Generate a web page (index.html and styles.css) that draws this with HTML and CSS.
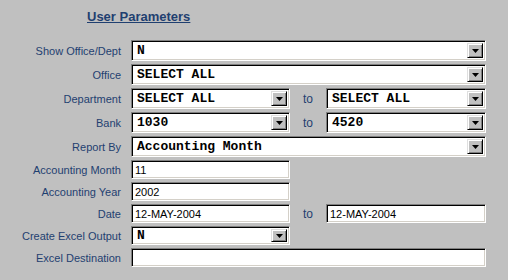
FILE: index.html
```html
<!DOCTYPE html>
<html lang="en">
<head>
  <meta charset="UTF-8"/>
  <title>User Parameters</title>
  <link rel="stylesheet" href="styles.css">
</head>
<body>
  <h1 class="title">User Parameters</h1>

  <form class="params">
    <label class="lbl">Show Office/Dept</label>
    <div class="select wide"><span class="val">N</span><span class="btn"><svg width="7" height="4" viewBox="0 0 7 4"><path d="M0 0h7L3.5 4z"/></svg></span></div>

    <label class="lbl">Office</label>
    <div class="select wide"><span class="val">SELECT ALL</span><span class="btn"><svg width="7" height="4" viewBox="0 0 7 4"><path d="M0 0h7L3.5 4z"/></svg></span></div>

    <label class="lbl">Department</label>
    <div class="select"><span class="val">SELECT ALL</span><span class="btn"><svg width="7" height="4" viewBox="0 0 7 4"><path d="M0 0h7L3.5 4z"/></svg></span></div>
    <span class="to">to</span>
    <div class="select"><span class="val">SELECT ALL</span><span class="btn"><svg width="7" height="4" viewBox="0 0 7 4"><path d="M0 0h7L3.5 4z"/></svg></span></div>

    <label class="lbl">Bank</label>
    <div class="select"><span class="val">1030</span><span class="btn"><svg width="7" height="4" viewBox="0 0 7 4"><path d="M0 0h7L3.5 4z"/></svg></span></div>
    <span class="to">to</span>
    <div class="select"><span class="val">4520</span><span class="btn"><svg width="7" height="4" viewBox="0 0 7 4"><path d="M0 0h7L3.5 4z"/></svg></span></div>

    <label class="lbl">Report By</label>
    <div class="select wide"><span class="val">Accounting Month</span><span class="btn"><svg width="7" height="4" viewBox="0 0 7 4"><path d="M0 0h7L3.5 4z"/></svg></span></div>

    <label class="lbl">Accounting Month</label>
    <input class="text" type="text" value="11">
    <span class="rest"></span>

    <label class="lbl">Accounting Year</label>
    <input class="text" type="text" value="2002">
    <span class="rest"></span>

    <label class="lbl">Date</label>
    <input class="text" type="text" value="12-MAY-2004">
    <span class="to">to</span>
    <input class="text" type="text" value="12-MAY-2004">

    <label class="lbl">Create Excel Output</label>
    <div class="select short"><span class="val">N</span><span class="btn"><svg width="7" height="4" viewBox="0 0 7 4"><path d="M0 0h7L3.5 4z"/></svg></span></div>
    <span class="rest"></span>

    <label class="lbl">Excel Destination</label>
    <input class="text wide" type="text" value="">
  </form>
</body>
</html>
```

FILE: styles.css
```css
:root {
  --bg: #c0c0c0;
  --label: #1f3f70;
  --dark: #808080;
  --light: #ffffff;
}

* {
  box-sizing: border-box;
}

body {
  margin: 0;
  background: var(--bg);
  font-family: "Liberation Sans", Arial, sans-serif;
  font-size: 11px;
  color: var(--label);
}

.title {
  margin: 0;
  padding: 9px 0 0 87px;
  height: 40px;
  font-size: 13px;
  font-weight: bold;
  text-decoration: underline;
  color: var(--label);
}

.params {
  display: grid;
  grid-template-columns: 131px 159px 36px 160px;
  row-gap: 3px;
  margin: 0;
}

.lbl {
  display: flex;
  align-items: center;
  justify-content: flex-end;
  padding-right: 10px;
  white-space: nowrap;
}

.to {
  display: flex;
  align-items: center;
  padding-left: 13px;
  font-size: 12px;
}

.wide {
  grid-column: span 3;
}

.rest {
  grid-column: span 2;
}

/* sunken field */
.select,
.text {
  border: 1px solid;
  border-color: var(--dark) var(--light) var(--light) var(--dark);
  box-shadow: inset 1px 1px 0 #000, inset -1px -1px 0 #d4d0c8;
  background: #fff;
}

.select {
  display: flex;
  align-items: center;
  height: 21px;
  padding: 2px;
}

.select.short {
  height: 19px;
}

.select .val {
  flex: 1;
  padding-left: 3px;
  font-family: "Liberation Mono", "Courier New", monospace;
  font-weight: bold;
  font-size: 13px;
  color: #000;
  white-space: nowrap;
  overflow: hidden;
}

.select .btn {
  width: 16px;
  height: 100%;
  display: flex;
  align-items: center;
  justify-content: center;
  background: var(--bg);
  border: 1px solid;
  border-color: #dfdfdf #000 #000 #dfdfdf;
  box-shadow: inset 1px 1px 0 #fff, inset -1px -1px 0 var(--dark);
}

.select .btn svg {
  display: block;
  fill: #000;
}

.text {
  height: 19px;
  padding: 0 0 0 3px;
  margin: 0;
  font-family: "Liberation Sans", Arial, sans-serif;
  font-size: 11px;
  color: #000;
  outline: none;
}
```
